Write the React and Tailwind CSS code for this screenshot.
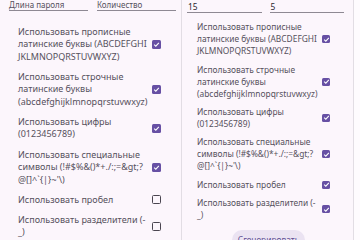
import React from 'react';

const rows = [
  ['Использовать прописные', 'латинские буквы (ABCDEFGHI', 'JKLMNOPQRSTUVWXYZ)'],
  ['Использовать строчные', 'латинские буквы', '(abcdefghijklmnopqrstuvwxyz)'],
  ['Использовать цифры', '(0123456789)'],
  ['Использовать специальные', 'символы (!#$%&()*+./:;=&gt;?', '@[]^`{|}~\'\\)'],
  ['Использовать пробел'],
  ['Использовать разделители (-', '_)'],
];

function Check({ on, small }) {
  const size = small ? 'w-[8px] h-[8px]' : 'w-[9px] h-[9px]';
  if (on) {
    return (
      <div className={`${size} rounded-[1.5px] bg-[#6750a4] flex items-center justify-center shrink-0`}>
        <svg width="7" height="7" viewBox="0 0 8 8">
          <path d="M1.3 4.1 L3.2 5.9 L6.7 2.2" fill="none" stroke="white" strokeWidth="1.2" />
        </svg>
      </div>
    );
  }
  return <div className={`${size} rounded-[1.5px] border-[1.5px] border-[#4a4550] shrink-0`} />;
}

function Row({ lines, on, small }) {
  return (
    <div className={small ? 'flex items-center justify-between py-[3.2px]' : 'flex items-center justify-between py-[3.8px]'}>
      <div className={small ? 'text-[8.4px] leading-[12px] text-[#56515d]' : 'text-[9px] leading-[12.5px] text-[#56515d]'}>
        {lines.map((t, i) => (
          <div key={i} className="whitespace-nowrap">{t}</div>
        ))}
      </div>
      <Check on={on} small={small} />
    </div>
  );
}

function Field({ value, label }) {
  return (
    <div className="flex-1 border-b border-[#8e8993]">
      <div className={value ? 'text-[8.4px] leading-[11px] text-[#2a2630] pl-[1px]' : 'text-[8px] leading-[11px] text-[#56515d]'}>
        {value || label}
      </div>
    </div>
  );
}

export default function App() {
  const left = [true, true, true, true, false, false];
  return (
    <div className="w-[360px] h-[240px] overflow-hidden flex bg-[#fcf6fc]" style={{ fontFamily: '"Noto Sans", sans-serif' }}>
      <div className="w-[182px] shrink-0 border-r border-[#e2dde4] overflow-hidden">
        <div className="flex gap-[9px] pl-[9px] pr-[5px] -mt-[1px] pb-[1px]">
          <Field label="Длина пароля" />
          <Field label="Количество" />
        </div>
        <div className="pl-[18px] pr-[20px] pt-[10px]">
          {rows.map((r, i) => (
            <Row key={i} lines={r} on={left[i]} />
          ))}
        </div>
      </div>
      <div className="w-[172px] shrink-0 border-r border-[#e2dde4] overflow-hidden flex flex-col">
        <div className="flex gap-[8px] pl-[5px] pr-[9px] pt-[1px]">
          <Field value="15" />
          <Field value="5" />
        </div>
        <div className="pl-[15px] pr-[23px] pt-[5px]">
          {rows.map((r, i) => (
            <Row key={i} lines={r} on small />
          ))}
        </div>
        <div className="flex justify-center pt-[6px] pl-[2px]">
          <div className="w-[73px] h-[20px] rounded-full bg-[#ebe3f2] text-[#5d4d92] text-[8.4px] flex items-center justify-center shrink-0">Сгенерировать</div>
        </div>
      </div>
      <div className="flex-1 bg-[#fefbfe]" />
    </div>
  );
}
